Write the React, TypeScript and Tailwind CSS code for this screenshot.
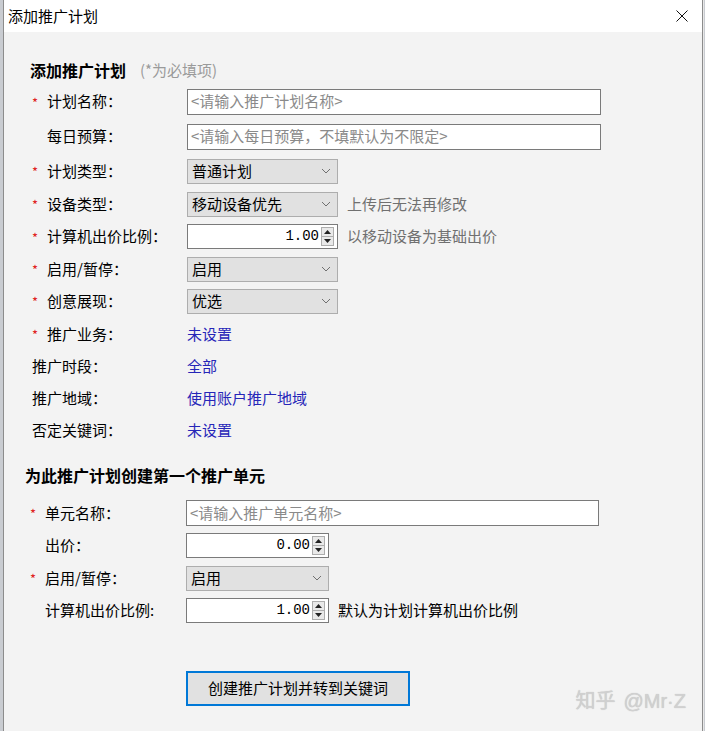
import React from "react";

const font = { fontFamily: '"Noto Sans CJK SC", "Liberation Sans", sans-serif' };

function Chevron() {
  return (
    <svg width="10" height="6" viewBox="0 0 10 6" className="shrink-0">
      <path d="M1 1 L5 5 L9 1" fill="none" stroke="#707070" strokeWidth="1" />
    </svg>
  );
}

function Spinner() {
  return (
    <div className="flex flex-col w-[13px] h-[19px] border border-[#adadad] bg-[#e9e9e9] shrink-0">
      <div className="flex-1 flex items-center justify-center border-b border-[#adadad]">
        <svg width="7" height="4" viewBox="0 0 7 4">
          <path d="M0 4 L3.5 0 L7 4 Z" fill="#222" />
        </svg>
      </div>
      <div className="flex-1 flex items-center justify-center">
        <svg width="7" height="4" viewBox="0 0 7 4">
          <path d="M0 0 L3.5 4 L7 0 Z" fill="#222" />
        </svg>
      </div>
    </div>
  );
}

function TextBox({ placeholder, w }: { placeholder: string; w: string }) {
  return (
    <div className={`${w} h-[26px] border border-[#7a7a7a] bg-white flex items-center px-[3px] text-[15px] text-[#8a8a8a]`}>
      {placeholder}
    </div>
  );
}

function Select({ value, w }: { value: string; w: string }) {
  return (
    <div className={`${w} h-[25px] border border-[#adadad] bg-[#e1e1e1] flex items-center justify-between pl-[4px] pr-[6px] text-[15px] text-black`}>
      <span>{value}</span>
      <Chevron />
    </div>
  );
}

function NumberBox({ value, w }: { value: string; w: string }) {
  return (
    <div className={`${w} h-[25px] border border-[#7a7a7a] bg-white flex items-center justify-end gap-[2px] pr-[3px] text-[14px] text-black`}>
      <span style={{ fontFamily: '"Liberation Mono", monospace' }}>{value}</span>
      <Spinner />
    </div>
  );
}

function Row({
  h,
  star,
  label,
  labelW,
  children,
}: {
  h: string;
  star?: boolean | "none";
  label: string;
  labelW: string;
  children?: React.ReactNode;
}) {
  return (
    <div className={`flex items-center ${h}`}>
      <div className={`${labelW} flex items-center shrink-0 text-[15px] text-black`}>
        {star !== "none" && (
          <span className="w-[17px] pl-[2px] pt-[2px] text-[#e02020] text-[13px]">{star ? "*" : ""}</span>
        )}
        <span>{label}</span>
      </div>
      {children}
    </div>
  );
}

export default function App() {
  return (
    <div className="w-[705px] h-[731px] flex bg-[#c9ccd1] overflow-hidden" style={font}>
      <div className="w-[3px] shrink-0" />
      <div className="w-[700px] h-full flex flex-col border-l border-r border-[#8c8c8c] bg-[#f3f3f3] relative">
        {/* Title bar */}
        <div className="h-[32px] bg-white flex items-center justify-between pl-[4px] pr-[14px] shrink-0">
          <span className="text-[15px] text-black">添加推广计划</span>
          <svg width="12" height="12" viewBox="0 0 12 12">
            <path d="M0.5 0.5 L11.5 11.5 M11.5 0.5 L0.5 11.5" stroke="#111" strokeWidth="1" />
          </svg>
        </div>

        <div className="flex flex-col pt-[24px]">
          {/* Section 1 */}
          <div className="pl-[26px] flex flex-col">
            <div className="h-[28px] flex items-center gap-[14px]">
              <span className="text-[16px] font-bold text-black">添加推广计划</span>
              <span className="text-[15px] text-[#9a9a9a]">(*为必填项)</span>
            </div>
            <Row h="h-[35px]" star label="计划名称：" labelW="w-[157px]">
              <TextBox w="w-[414px]" placeholder="<请输入推广计划名称>" />
            </Row>
            <Row h="h-[35px]" star={false} label="每日预算：" labelW="w-[157px]">
              <TextBox w="w-[414px]" placeholder="<请输入每日预算，不填默认为不限定>" />
            </Row>
            <Row h="h-[34px]" star label="计划类型：" labelW="w-[157px]">
              <Select w="w-[151px]" value="普通计划" />
            </Row>
            <Row h="h-[32px]" star label="设备类型：" labelW="w-[157px]">
              <Select w="w-[151px]" value="移动设备优先" />
              <span className="ml-[9px] text-[15px] text-[#707070]">上传后无法再修改</span>
            </Row>
            <Row h="h-[33px]" star label="计算机出价比例：" labelW="w-[157px]">
              <NumberBox w="w-[151px]" value="1.00" />
              <span className="ml-[9px] text-[15px] text-[#707070]">以移动设备为基础出价</span>
            </Row>
            <Row h="h-[32px]" star label="启用/暂停：" labelW="w-[157px]">
              <Select w="w-[151px]" value="启用" />
            </Row>
            <Row h="h-[32px]" star label="创意展现：" labelW="w-[157px]">
              <Select w="w-[151px]" value="优选" />
            </Row>
            <Row h="h-[34px]" star label="推广业务：" labelW="w-[157px]">
              <span className="text-[15px] text-[#2626b8]">未设置</span>
            </Row>
            <Row h="h-[31px]" star="none" label="推广时段：" labelW="w-[157px] pl-[2px]">
              <span className="text-[15px] text-[#2626b8]">全部</span>
            </Row>
            <Row h="h-[32px]" star="none" label="推广地域：" labelW="w-[157px] pl-[2px]">
              <span className="text-[15px] text-[#2626b8]">使用账户推广地域</span>
            </Row>
            <Row h="h-[32px]" star="none" label="否定关键词：" labelW="w-[157px] pl-[2px]">
              <span className="text-[15px] text-[#2626b8]">未设置</span>
            </Row>
          </div>

          {/* Section 2 */}
          <div className="pl-[21px] flex flex-col mt-[15px]">
            <div className="h-[28px] flex items-center">
              <span className="text-[16px] font-bold text-black">为此推广计划创建第一个推广单元</span>
            </div>
            <div className="pl-[3px] flex flex-col mt-[8px]">
              <Row h="h-[32px]" star label="单元名称：" labelW="w-[158px]">
                <TextBox w="w-[413px]" placeholder="<请输入推广单元名称>" />
              </Row>
              <Row h="h-[33px]" star={false} label="出价：" labelW="w-[158px]">
                <NumberBox w="w-[143px]" value="0.00" />
              </Row>
              <Row h="h-[32px]" star label="启用/暂停：" labelW="w-[158px]">
                <Select w="w-[143px]" value="启用" />
              </Row>
              <Row h="h-[32px]" star={false} label="计算机出价比例:" labelW="w-[158px]">
                <NumberBox w="w-[143px]" value="1.00" />
                <span className="ml-[9px] text-[15px] text-black">默认为计划计算机出价比例</span>
              </Row>
            </div>
          </div>

          {/* Button */}
          <div className="pl-[182px] mt-[45px]">
            <button className="w-[224px] h-[35px] border-2 border-[#0078d7] bg-[#e1e1e1] text-[15px] text-black flex items-center justify-center">
              创建推广计划并转到关键词
            </button>
          </div>
        </div>

        <div
          className="absolute right-[16px] bottom-[15px] flex items-baseline gap-[8px] text-[20px] text-[#d0d0d0]"
          style={{ textShadow: "0 0 1px #c0c0c0" }}
        >
          <span>知乎</span>
          <span style={{ fontFamily: '"Liberation Sans", sans-serif' }}>@Mr·Z</span>
        </div>
      </div>
      <div className="w-[1px] shrink-0 bg-[#e8e8e8]" />
    </div>
  );
}
